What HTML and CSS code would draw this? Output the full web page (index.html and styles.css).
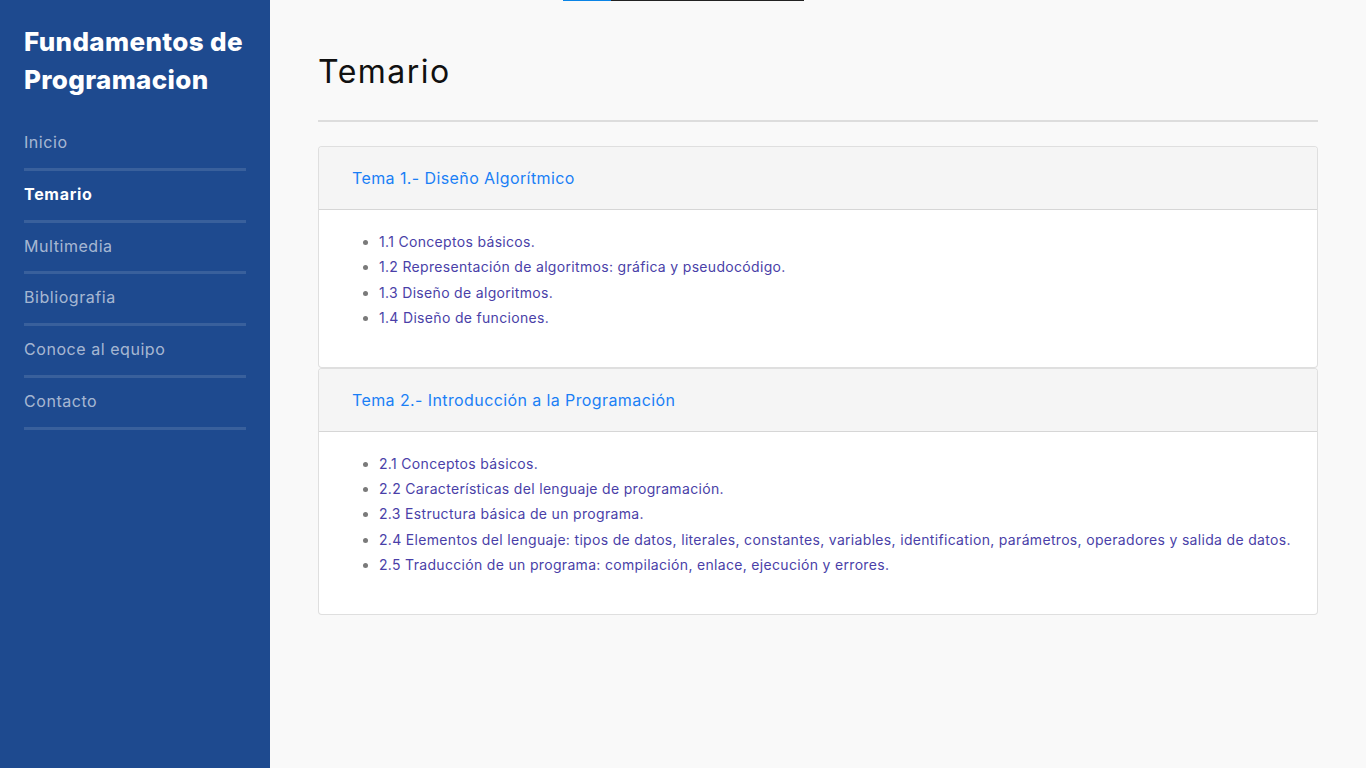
FILE: index.html
```html
<!DOCTYPE html>
<html lang="es">
<head>
<meta charset="utf-8">
<title>Temario - Fundamentos de Programacion</title>
<link rel="stylesheet" href="styles.css">
</head>
<body>
<div class="layout">
  <aside class="sidebar">
    <h2 class="brand">Fundamentos de Programacion</h2>
    <ul class="nav">
      <li><a href="#">Inicio</a></li>
      <li class="active"><a href="#">Temario</a></li>
      <li><a href="#">Multimedia</a></li>
      <li><a href="#">Bibliografia</a></li>
      <li><a href="#">Conoce al equipo</a></li>
      <li><a href="#">Contacto</a></li>
    </ul>
  </aside>
  <main class="content">
    <div class="topline"><span class="seg-blue"></span><span class="seg-dark"></span></div>
    <h1 class="page-title">Temario</h1>
    <hr class="rule">
    <div class="accordion">
      <div class="card">
        <div class="card-header"><button class="btn-link">Tema 1.- Diseño Algorítmico</button></div>
        <div class="card-body">
          <ul class="topics">
            <li>1.1 Conceptos básicos.</li>
            <li>1.2 Representación de algoritmos: gráfica y pseudocódigo.</li>
            <li>1.3 Diseño de algoritmos.</li>
            <li>1.4 Diseño de funciones.</li>
          </ul>
        </div>
      </div>
      <div class="card">
        <div class="card-header"><button class="btn-link">Tema 2.- Introducción a la Programación</button></div>
        <div class="card-body">
          <ul class="topics">
            <li>2.1 Conceptos básicos.</li>
            <li>2.2 Características del lenguaje de programación.</li>
            <li>2.3 Estructura básica de un programa.</li>
            <li>2.4 Elementos del lenguaje: tipos de datos, literales, constantes, variables, identification, parámetros, operadores y salida de datos.</li>
            <li>2.5 Traducción de un programa: compilación, enlace, ejecución y errores.</li>
          </ul>
        </div>
      </div>
    </div>
  </main>
</div>
</body>
</html>
```
FILE: styles.css
```css
* { box-sizing: border-box; }
html, body { margin: 0; padding: 0; height: 100%; }
body {
  font-family: "Inter", "Open Sans", sans-serif;
  background: #f9f9f9;
  color: #212529;
}
.layout { display: flex; min-height: 768px; }
.sidebar {
  width: 270px;
  flex: 0 0 270px;
  background: #1e4a8f;
  padding: 23px 24px 0 24px;
}
.brand {
  margin: 0 -20px 0 0;
  color: #fff;
  font-size: 26px;
  line-height: 38px;
  font-weight: 800;
  letter-spacing: 0.35px;
}
.nav { list-style: none; margin: 20px 0 0 0; padding: 0; }
.nav li {
  padding: 11px 0 13.8px 0;
  border-bottom: 3px solid rgba(255,255,255,0.12);
  line-height: 24px;
}
.nav a {
  color: rgba(255,255,255,0.62);
  text-decoration: none;
  font-size: 16px;
  letter-spacing: 0.55px;
}
.nav li.active a { color: #fff; font-weight: 700; letter-spacing: 0.7px; }

.content { flex: 1; padding: 0 48px; }
.topline { display: flex; height: 1px; margin-left: 245px; }
.seg-blue { width: 48px; background: #0a84e6; }
.seg-dark { width: 193px; background: #222; }
.page-title {
  margin: 46px 0 0 0;
  font-size: 32px;
  line-height: 50px;
  font-weight: 400;
  color: #111;
  letter-spacing: 1.5px;
}
.rule { margin: 23px 0 24px 0; border: 0; border-top: 2px solid #ddd; }

.card {
  background: #fff;
  border: 1px solid rgba(0,0,0,0.125);
  border-radius: 4px;
  overflow: hidden;
}
.card-header {
  background: #f5f5f5;
  border-bottom: 1px solid rgba(0,0,0,0.125);
  padding: 12px 20px;
}
.btn-link {
  background: none;
  border: 0;
  font-family: inherit;
  color: #1a7ff5;
  font-size: 16px;
  line-height: 24px;
  padding: 7px 12px 7px 13px;
  letter-spacing: 0.4px;
  cursor: pointer;
}
.card-body { padding: 19px 20px 20px 20px; }
.topics {
  margin: 0 0 16px 0;
  padding-left: 40px;
}
.topics li {
  font-size: 14px;
  line-height: 25.4px;
  color: #4a3fa8;
  letter-spacing: 0.32px;
}
.topics li::marker { color: #7a7a7a; }
```
